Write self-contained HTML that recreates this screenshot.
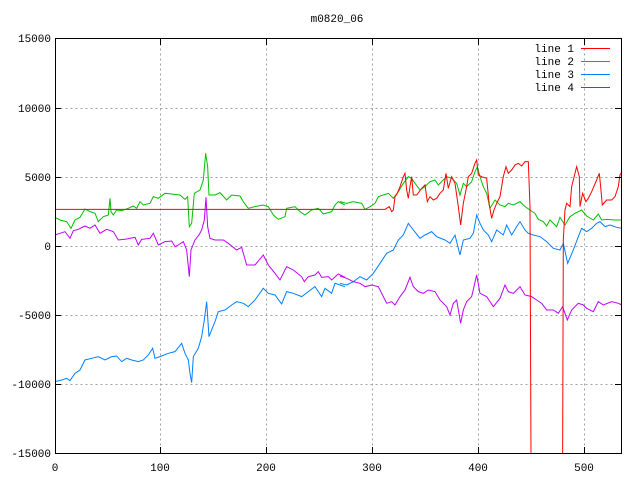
<!DOCTYPE html>
<html><head><meta charset="utf-8"><style>
html,body{margin:0;padding:0;background:#fff}
svg{display:block}
text{font-family:"Liberation Mono","DejaVu Sans Mono",monospace;font-size:11px;fill:#000}
.g{stroke:#a0a0a0;stroke-width:1;stroke-dasharray:2,3;fill:none}
.d{fill:none;vector-effect:non-scaling-stroke;stroke-width:1}
</style></head><body>
<svg width="640" height="480" viewBox="0 0 640 480">
<rect width="640" height="480" fill="#fff"/>
<text x="337" y="22" text-anchor="middle">m0820_06</text>
<g class="g">
<path d="M55.5 108.5H621M55.5 177.5H621M55.5 246.5H621M55.5 315.5H621M55.5 384.5H621"/>
<path d="M160.5 38.5V453M266.5 38.5V453M372.5 38.5V453M478.5 38.5V453M584.5 38.5V453"/>
</g>
<g text-anchor="end">
<text x="51" y="42">15000</text><text x="51" y="112">10000</text><text x="51" y="181">5000</text>
<text x="51" y="250">0</text><text x="51" y="319">-5000</text><text x="51" y="388">-10000</text><text x="51" y="457">-15000</text>
</g>
<g text-anchor="middle">
<text x="55" y="471">0</text><text x="160" y="471">100</text><text x="266" y="471">200</text>
<text x="372" y="471">300</text><text x="478" y="471">400</text><text x="584" y="471">500</text>
</g>
<g transform="translate(55,140) scale(0.3333)">
<polyline class="d" stroke="#00c000" points="0,232 15,240 35,245 48,265 60,240 75,232 90,207 105,215 120,220 130,245 145,230 160,225 165,175 168,215 175,225 185,210 200,212 220,205 235,198 245,205 255,185 265,195 285,190 295,170 310,175 330,160 350,162 375,165 390,178 398,170 403,260 410,250 418,160 435,150 445,120 452,40 458,80 462,165 480,165 495,158 515,180 530,165 555,168 565,185 580,205 600,200 625,195 640,200 655,225 670,238 690,230 695,205 720,200 735,215 750,225 770,210 790,205 805,222 830,215 840,195 850,185 870,195"/>
<polyline class="d" stroke="#0080ff" points="0,725 20,720 35,715 45,722 60,700 75,690 90,660 110,655 130,650 150,660 170,650 185,648 200,665 215,655 230,660 250,665 265,660 280,645 293,625 300,655 320,648 340,640 360,635 380,610 390,640 400,660 405,700 410,728 415,650 430,625 440,590 448,540 455,485 462,590 470,570 480,545 490,515 510,510 530,495 545,485 565,490 580,500 600,480 625,445 640,460 660,465 680,492 695,455 715,460 740,470 760,455 780,440 800,470 810,445 830,460 840,430 870,440"/>
<polyline class="d" stroke="#c000ff" points="0,285 15,280 30,275 45,295 55,272 70,268 90,258 105,265 120,255 135,280 155,268 175,275 190,300 215,297 240,292 250,315 260,298 285,295 295,280 310,315 330,305 350,303 360,320 370,315 385,305 395,330 403,410 408,330 420,300 432,285 440,270 448,240 453,172 458,260 465,295 480,300 505,300 520,310 545,330 560,322 575,375 600,375 625,345 640,375 660,400 675,420 695,380 715,390 740,410 748,425 760,410 780,405 790,395 800,412 820,410 830,420 850,402 870,412"/>
<polyline class="d" stroke="#ff0000" points="0,208 870,208"/>
</g>
<g transform="translate(340,140) scale(0.3333)">
<polyline class="d" stroke="#00c000" points="0,185 20,190 40,185 65,190 75,208 90,200 105,190 115,170 130,165 145,160 160,175 175,155 190,130 205,110 215,115 225,130 240,150 255,140 270,125 285,120 295,135 305,125 320,110 335,115 350,130 360,165 370,130 380,140 395,125 405,95 412,80 420,110 430,140 440,160 450,205 465,180 480,195 495,200 505,190 520,195 540,185 555,200 570,210 585,220 595,238 610,245 620,258 630,240 650,260 660,232 675,255 690,230 705,220 725,210 740,228 760,240 775,222 785,240 800,238 825,240 846,240"/>
<polyline class="d" stroke="#0080ff" points="0,430 20,435 40,425 60,410 80,420 100,400 120,370 140,340 160,330 175,300 190,285 205,250 220,270 240,295 255,285 275,275 290,290 315,300 330,310 345,285 360,345 370,300 390,295 400,280 410,225 420,250 430,270 445,285 455,305 470,270 490,285 500,255 515,285 530,260 540,245 555,270 565,280 580,285 600,290 620,305 640,325 660,330 670,310 683,370 700,330 715,290 725,265 740,275 755,265 770,250 780,245 795,260 810,255 830,262 846,265"/>
<polyline class="d" stroke="#c000ff" points="0,408 20,415 40,425 60,430 75,440 95,435 115,440 130,470 140,490 155,485 165,495 180,470 195,450 210,412 220,440 235,455 250,460 265,450 285,455 300,480 320,500 330,525 340,490 350,480 362,550 370,510 380,485 395,470 410,405 420,460 440,470 460,500 480,475 495,435 505,455 520,460 540,440 555,465 575,470 590,480 605,490 620,510 640,510 655,520 668,500 682,540 695,510 715,490 730,495 740,505 760,515 775,485 790,495 815,485 835,490 846,495"/>
<polyline class="d" stroke="#ff0000" points="0,208 135,208 140,205 148,200 155,215 160,210 165,170 172,160 180,140 190,110 195,100 200,150 205,175 210,140 215,110 220,165 230,165 245,145 255,135 262,185 270,170 280,180 290,175 300,160 310,150 318,100 325,145 335,110 345,130 355,200 362,255 370,190 378,150 385,110 395,100 405,70 410,60 415,105 425,110 440,115 448,195 455,235 462,210 470,190 480,170 490,110 498,80 505,100 515,90 525,75 535,70 545,78 555,65 565,65 570,200 573,939"/>
<polyline class="d" stroke="#ff0000" points="668,939 670,300 675,210 680,190 690,200 695,140 705,100 710,80 718,110 720,200 728,160 738,185 745,175 755,155 770,120 778,100 782,140 787,195 800,180 815,180 825,170 835,140 840,105 846,95"/>
</g>
<g text-anchor="end">
<text x="574" y="52">line 1</text><text x="574" y="65">line 2</text>
<text x="574" y="78">line 3</text><text x="574" y="91">line 4</text>
</g>
<path d="M581 48.5H610" stroke="#ff0000"/>
<path d="M581 61.5H610" stroke="#00c000"/>
<path d="M581 74.5H610" stroke="#0080ff"/>
<path d="M581 87.5H610" stroke="#c000ff"/>
<rect x="55.5" y="38.5" width="566" height="415" fill="none" stroke="#000"/>
<g stroke="#000">
<path d="M55 108.5h6M55 177.5h6M55 246.5h6M55 315.5h6M55 384.5h6"/>
<path d="M621 108.5h-6M621 177.5h-6M621 246.5h-6M621 315.5h-6M621 384.5h-6"/>
<path d="M160.5 453v-6M266.5 453v-6M372.5 453v-6M478.5 453v-6M584.5 453v-6"/>
<path d="M160.5 39v6M266.5 39v6M372.5 39v6M478.5 39v6M584.5 39v6"/>
</g>
</svg>
</body></html>
